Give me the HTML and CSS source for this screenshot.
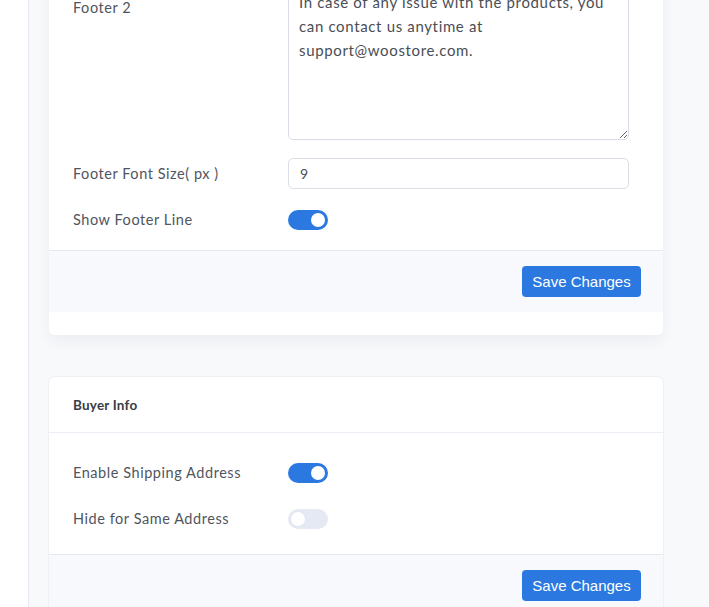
FILE: index.html
```html
<!DOCTYPE html>
<html>
<head>
<meta charset="utf-8">
<link rel="stylesheet" href="styles.css">
</head>
<body>
<div class="layout">
  <aside class="sidebar"></aside>
  <main class="main">
    <section class="card card-first">
      <div class="card-body body-first">
        <div class="row row-top">
          <label class="label label-top">Footer 2</label>
          <textarea class="textarea">In case of any issue with the products, you can contact us anytime at support@woostore.com.</textarea>
        </div>
        <div class="row">
          <label class="label">Footer Font Size( px )</label>
          <input class="input" type="text" value="9">
        </div>
        <div class="row">
          <label class="label">Show Footer Line</label>
          <span class="toggle on"><span class="knob"></span></span>
        </div>
      </div>
      <div class="card-footer">
        <button class="btn">Save Changes</button>
      </div>
    </section>

    <section class="card card-second">
      <div class="card-header">Buyer Info</div>
      <div class="card-body body-second">
        <div class="row">
          <label class="label">Enable Shipping Address</label>
          <span class="toggle on"><span class="knob"></span></span>
        </div>
        <div class="row">
          <label class="label">Hide for Same Address</label>
          <span class="toggle off"><span class="knob"></span></span>
        </div>
      </div>
      <div class="card-footer">
        <button class="btn">Save Changes</button>
      </div>
    </section>
  </main>
</div>
</body>
</html>
```

FILE: styles.css
```css
* { box-sizing: border-box; }

html, body {
  margin: 0;
  height: 100%;
  overflow: hidden;
}

body {
  background: #f8f9fb;
  font-family: Lato, "Open Sans", sans-serif;
  color: #50555e;
}

.layout {
  display: flex;
  height: 100%;
}

.sidebar {
  width: 29px;
  flex: none;
  background: #ffffff;
  border-right: 1px solid #e6e9f2;
}

.main {
  flex: none;
  width: 634px;
  padding-left: 20px;
}

.card {
  background: #ffffff;
  border-radius: 6px;
  width: 614px;
}

.card-first {
  margin-top: -41px;
  padding-bottom: 23px;
  box-shadow: 0 6px 14px rgba(40, 50, 80, 0.06);
}

.card-second {
  margin-top: 42px;
  box-shadow: 0 0 0 1px #eef0f4;
  overflow: hidden;
}

.card-body {
  padding: 0 24px;
  display: flex;
  flex-direction: column;
}

.body-first {
  padding-top: 26px;
  padding-bottom: 20px;
  gap: 18px;
}

.body-first .row:last-child { margin-top: 3px; }

.body-second {
  padding-top: 30px;
  padding-bottom: 25px;
  gap: 26px;
  border-top: 1px solid #eceff5;
}

.row {
  display: grid;
  grid-template-columns: 215px 341px;
  align-items: center;
  min-height: 20px;
}

.row-top { align-items: start; }

.label {
  font-size: 14.5px;
  letter-spacing: 0.55px;
  color: #50555e;
  line-height: 20px;
}

.label-top { padding-top: 13px; }

.textarea {
  display: block;
  width: 341px;
  height: 155px;
  margin: 0;
  padding: 4px 10px;
  border: 1px solid #d9dce6;
  border-radius: 5px;
  font-family: Lato, "Open Sans", sans-serif;
  font-size: 15px;
  letter-spacing: 0.65px;
  line-height: 24px;
  color: #4a4e56;
  background: #fff;
  resize: vertical;
  outline: none;
}

.input {
  display: block;
  width: 341px;
  height: 31px;
  margin: 0;
  padding: 0 11px;
  border: 1px solid #dcdfe6;
  border-radius: 5px;
  font-family: Lato, "Open Sans", sans-serif;
  font-size: 14px;
  color: #4a4e56;
  background: #fff;
  outline: none;
}

.toggle {
  display: flex;
  align-items: center;
  width: 40px;
  height: 20px;
  border-radius: 10px;
  padding: 0 3px;
}

.toggle .knob {
  width: 14px;
  height: 14px;
  border-radius: 50%;
  background: #fff;
}

.toggle.on {
  background: #2b78e0;
  justify-content: flex-end;
}

.toggle.off {
  background: #e5e9f4;
  justify-content: flex-start;
}

.toggle.off .knob {
  box-shadow: 0 0 0 1px #e1e5f0;
}

.card-header {
  height: 55px;
  padding: 0 24px;
  display: flex;
  align-items: center;
  font-size: 13.5px;
  font-weight: 700;
  color: #3a3d44;
  letter-spacing: 0.2px;
}

.card-footer {
  background: #f7f9fc;
  border-top: 1px solid #e4e9f2;
  padding: 15px 22px;
  display: flex;
  justify-content: flex-end;
}

.btn {
  height: 31px;
  width: 119px;
  padding: 0;
  border: none;
  border-radius: 4px;
  background: #2b78e0;
  color: #ffffff;
  font-family: "Liberation Sans", Arial, sans-serif;
  font-size: 15px;
}
```
